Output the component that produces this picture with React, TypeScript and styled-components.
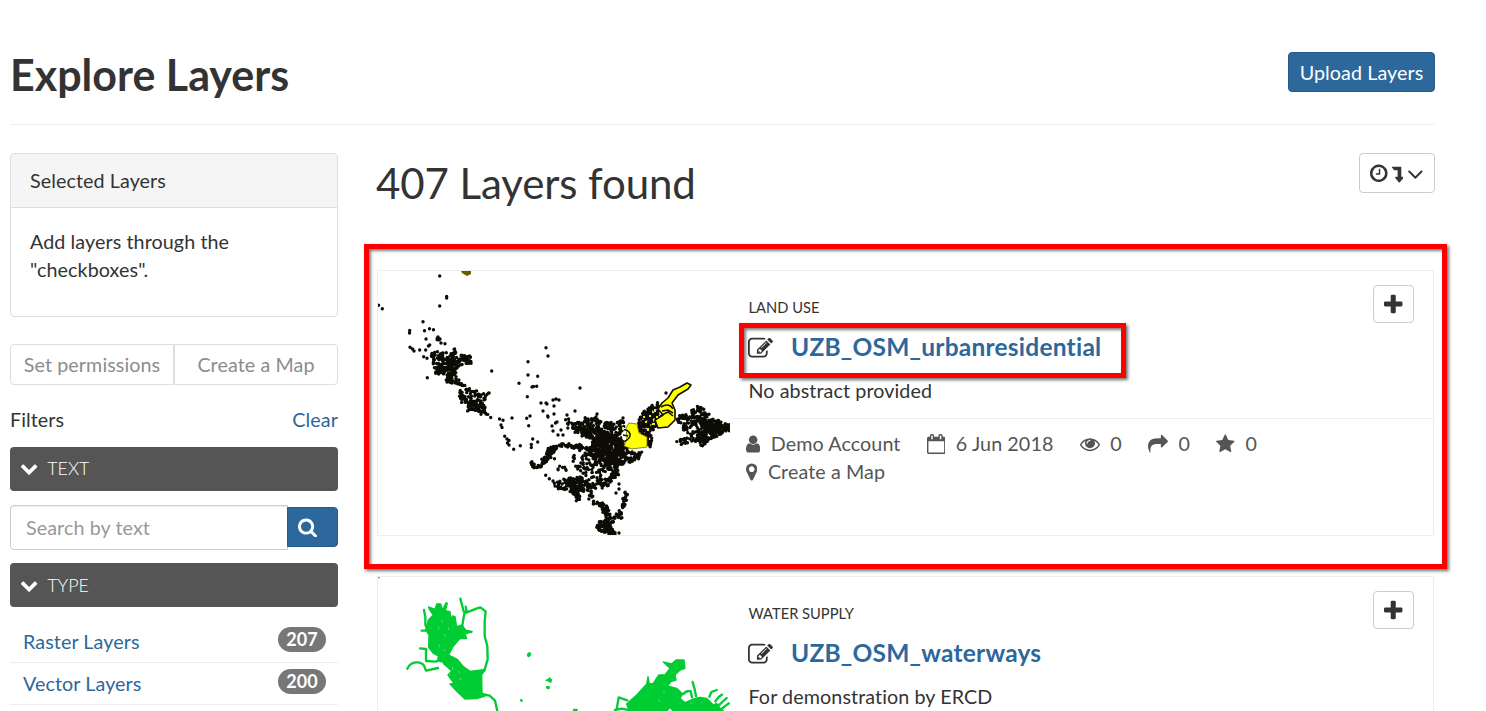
import React from 'react';
import styled, { createGlobalStyle } from 'styled-components';

const GlobalStyle = createGlobalStyle`
  *, *::before, *::after { box-sizing: border-box; }
  body {
    margin: 0;
    background: #fff;
    color: #333;
    font-family: Lato, 'Liberation Sans', sans-serif;
    font-size: 19.72px;
    line-height: 28px;
    letter-spacing: 0.09px;
  }
  button, input { font: inherit; color: inherit; letter-spacing: inherit; }
  h1, h2, h3, p, ul { margin: 0; padding: 0; }
`;

/* ---------- icons ---------- */

const ICONS = {
  chevronDown:
    'M1683 808l-742 741q-19 19-45 19t-45-19l-742-741q-19-19-19-45.500t19-45.500l166-165q19-19 45-19t45 19l531 531 531-531q19-19 45-19t45 19l166 165q19 19 19 45.500t-19 45.500z',
  search:
    'M1216 832q0-185-131.500-316.500t-316.500-131.500-316.500 131.500-131.500 316.500 131.500 316.500 316.500 131.500 316.500-131.500 131.500-316.500zm512 832q0 52-38 90t-90 38q-54 0-90-38l-343-342q-179 124-399 124-143 0-273.500-55.500t-225-150-150-225-55.500-273.500 55.500-273.500 150-225 225-150 273.500-55.500 273.500 55.500 225 150 150 225 55.500 273.500q0 220-124 399l343 343q37 37 37 90z',
  plus: 'M1600 736v192q0 40-28 68t-68 28h-416v416q0 40-28 68t-68 28h-192q-40 0-68-28t-28-68v-416h-416q-40 0-68-28t-28-68v-192q0-40 28-68t68-28h416v-416q0-40 28-68t68-28h192q40 0 68 28t28 68v416h416q40 0 68 28t28 68z',
  clock:
    'M1024 544v448q0 14-9 23t-23 9h-320q-14 0-23-9t-9-23v-64q0-14 9-23t23-9h224v-352q0-14 9-23t23-9h64q14 0 23 9t9 23zm416 352q0-148-73-273t-198-198-273-73-273 73-198 198-73 273 73 273 198 198 273 73 273-73 198-198 73-273zm224 0q0 209-103 385.500t-279.500 279.500-385.500 103-385.500-103-279.500-279.500-103-385.500 103-385.500 279.500-279.500 385.500-103 385.500 103 279.500 279.500 103 385.500z',
  levelDown:
    'M400 256h770q46 0 46 46v850h146q42 0 58 37 17 37-9 69l-320 384q-19 22-49 22t-49-22l-320-384q-27-31-9-69 17-37 58-37h166v-600h-300q-15 0-25-11l-190-238q-13-15-4-34 9-13 27-13z',
  angleDown:
    'M1395 736q0 13-10 23l-466 466q-10 10-23 10t-23-10l-466-466q-10-10-10-23t10-23l50-50q10-10 23-10t23 10l393 393 393-393q10-10 23-10t23 10l50 50q10 10 10 23z',
  user: 'M1536 1399q0 109-62.500 187t-150.500 78h-854q-88 0-150.500-78t-62.500-187q0-85 8.500-160.500t31.500-152 58.500-131 94-89 134.500-34.500q131 128 313 128t313-128q76 0 134.500 34.500t94 89 58.500 131 31.500 152 8.500 160.500zm-256-887q0 159-112.500 271.500t-271.500 112.500-271.500-112.500-112.500-271.500 112.500-271.500 271.500-112.500 271.500 112.500 112.500 271.500z',
  calendar:
    'M192 1664h1408v-1024h-1408v1024zm384-1216v-288q0-14-9-23t-23-9h-64q-14 0-23 9t-9 23v288q0 14 9 23t23 9h64q14 0 23-9t9-23zm768 0v-288q0-14-9-23t-23-9h-64q-14 0-23 9t-9 23v288q0 14 9 23t23 9h64q14 0 23-9t9-23zm384-64v1280q0 52-38 90t-90 38h-1408q-52 0-90-38t-38-90v-1280q0-52 38-90t90-38h128v-96q0-66 47-113t113-47h64q66 0 113 47t47 113v96h384v-96q0-66 47-113t113-47h64q66 0 113 47t47 113v96h128q52 0 90 38t38 90z',
  eye: 'M1664 960q-152-236-381-353 61 104 61 225 0 185-131.500 316.500t-316.500 131.500-316.500-131.500-131.500-316.500q0-121 61-225-229 117-381 353 133 205 333.500 326.500t434.500 121.500 434.500-121.500 333.500-326.500zm-720-384q0-20-14-34t-34-14q-125 0-214.500 89.500t-89.500 214.500q0 20 14 34t34 14 34-14 14-34q0-86 61-147t147-61q20 0 34-14t14-34zm848 384q0 34-20 69-140 230-376.500 368.500t-499.500 138.500-499.500-139-376.500-368q-20-35-20-69t20-69q140-229 376.500-368t499.500-139 499.500 139 376.500 368q20 35 20 69z',
  share:
    'M1792 640q0 26-19 45l-512 512q-19 19-45 19t-45-19-19-45v-256h-224q-98 0-175.500 6t-154 21.500-133 42.500-105.500 69.500-80 101-48.500 138.500-17.500 181q0 55 5 123 0 6 2.500 23.500t2.500 26.500q0 15-8.500 25t-23.500 10q-16 0-28-17-7-9-13-22t-13.500-30-10.500-24q-127-285-127-451 0-199 53-333 162-403 875-403h224v-256q0-26 19-45t45-19 45 19l512 512q19 19 19 45z',
  star: 'M1728 647q0 22-26 48l-363 354 86 500q1 7 1 20 0 21-10.500 35.500t-30.500 14.500q-19 0-40-12l-449-236-449 236q-22 12-40 12-21 0-31.500-14.500t-10.500-35.500q0-6 2-20l86-500-364-354q-25-27-25-48 0-37 56-46l502-73 225-455q19-41 49-41t49 41l225 455 502 73q56 9 56 46z',
  marker:
    'M1152 640q0-106-75-181t-181-75-181 75-75 181 75 181 181 75 181-75 75-181zm256 0q0 109-33 179l-364 774q-16 33-47.500 52t-67.500 19-67.500-19-46.500-52l-365-774q-33-70-33-179 0-212 150-362t362-150 362 150 150 362z',
  edit: 'M888 1184l116-116-152-152-116 116v56h96v96h56zm440-720q-16-16-33 1l-350 350q-17 17-1 33t33-1l350-350q17-17 1-33zm80 594v190q0 119-84.500 203.500t-203.500 84.500h-832q-119 0-203.500-84.500t-84.500-203.500v-832q0-119 84.500-203.500t203.500-84.500h832q63 0 117 25 15 7 18 23 3 17-9 29l-49 49q-14 14-32 8-23-6-45-6h-832q-66 0-113 47t-47 113v832q0 66 47 113t113 47h832q66 0 113-47t47-113v-126q0-13 9-22l64-64q15-15 35-7t20 29zm-96-738l288 288-672 672h-288v-288zm444 132l-92 92-288-288 92-92q28-28 68-28t68 28l152 152q28 28 28 68t-28 68z',
};

/* [left edge, advance width] of each glyph on the 1792 grid */
const BOX: Record<keyof typeof ICONS, [number, number]> = {
  chevronDown: [0, 1792],
  search: [64, 1664],
  plus: [192, 1408],
  clock: [128, 1536],
  levelDown: [384, 1024],
  angleDown: [320, 1152],
  user: [256, 1280],
  calendar: [64, 1664],
  eye: [0, 1792],
  share: [0, 1792],
  star: [64, 1664],
  marker: [384, 1024],
  edit: [0, 1792],
};

const Glyph = styled.svg`
  display: block;
  flex: none;
  fill: currentColor;
`;

function Icon({ name, size = 20 }: { name: keyof typeof ICONS; size?: number }) {
  const [x, w] = BOX[name];
  return (
    <Glyph width={(w / 1792) * size} height={size} viewBox={`${x} 0 ${w} 1792`} aria-hidden>
      <path d={ICONS[name]} />
    </Glyph>
  );
}

/* ---------- page ---------- */

const Page = styled.div`
  width: 1486px;
  height: 711px;
  overflow: hidden;
  padding: 0 51px 0 10px;
`;

const Header = styled.header`
  height: 125px;
  display: flex;
  justify-content: space-between;
  align-items: flex-start;
  border-bottom: 1px solid #eee;
  padding-top: 52px;
`;

const PageTitle = styled.h1`
  font-size: 43px;
  line-height: 45px;
  font-weight: 700;
  letter-spacing: 0;
`;

const PrimaryButton = styled.button`
  height: 40px;
  width: 147px;
  padding: 2px 0 0;
  border: 1px solid #265a8b;
  border-radius: 4px;
  background: #2c689c;
  color: #fff;
  line-height: 28px;
`;

const Columns = styled.div`
  display: flex;
  gap: 39px;
  padding: 28px 0 0;
`;

const Sidebar = styled.aside`
  width: 328px;
  flex: none;
`;

const Panel = styled.section`
  height: 164px;
  border: 1px solid #ddd;
  border-radius: 4px;
  overflow: hidden;
`;

const PanelHeading = styled.div`
  height: 54px;
  padding: 13px 19px;
  background: #f5f5f5;
  border-bottom: 1px solid #ddd;
`;

const PanelBody = styled.div`
  padding: 20px 80px 0 19px;
`;

const ButtonGroup = styled.div`
  display: flex;
  height: 41px;
  margin-top: 27px;
`;

const GroupButton = styled.button<{ $side: 'left' | 'right' }>`
  flex: 1;
  padding: 1px 0 0;
  background: #fff;
  border: 1px solid #ddd;
  border-radius: ${(p) => (p.$side === 'left' ? '4px 0 0 4px' : '0 4px 4px 0')};
  color: #8c8c8c;
`;

const FilterHead = styled.div`
  display: flex;
  justify-content: space-between;
  padding: 21px 0 13px;
`;

const Link = styled.a`
  color: #2c689c;
  text-decoration: none;
`;

const SectionBar = styled.div<{ $lift?: number }>`
  display: flex;
  align-items: center;
  gap: 9px;
  height: 44px;
  padding: 0 10px ${(p) => p.$lift ?? 0}px;
  border-radius: 4px;
  background: #555;
  color: #fff;
  font-size: 17.900px;
  font-weight: 300;
  letter-spacing: 0;
`;

const SearchRow = styled.form`
  display: flex;
  align-items: flex-start;
  margin: 14px 0 13px;
`;

const SearchInput = styled.input`
  width: 278px;
  height: 45px;
  padding: 0 15px 0 15px;
  border: 1px solid #ccc;
  border-radius: 4px 0 0 4px;
  box-shadow: inset 0 1px 1px rgba(0, 0, 0, 0.075);
  background: #fff;
  outline: none;
  &::placeholder { color: #999; opacity: 1; }
`;

const SearchButton = styled.button`
  display: flex;
  align-items: center;
  width: 51px;
  height: 40px;
  margin: 2px 0 0 -1px;
  padding: 0 0 0 10px;
  border: 1px solid #265a8b;
  border-radius: 0 4px 4px 0;
  background: #2c689c;
  color: #fff;
`;

const TypeList = styled.ul`
  list-style: none;
  padding-top: 14px;
`;

const TypeItem = styled.li`
  display: flex;
  justify-content: space-between;
  height: 42px;
  padding: 7px 12px 0 13px;
  border-bottom: 1px solid #eee;
`;

const Badge = styled.span`
  width: 48px;
  height: 25px;
  margin-top: -1px;
  border-radius: 13px;
  background: #777;
  color: #fff;
  font-size: 18px;
  font-weight: 700;
  line-height: 25px;
  text-align: center;
`;

const Main = styled.main`
  width: 1058px;
  flex: none;
`;

const ResultsHead = styled.div`
  display: flex;
  justify-content: space-between;
  height: 117px;
`;

const ResultsTitle = styled.h2`
  font-size: 42px;
  line-height: 46px;
  font-weight: 400;
  letter-spacing: -0.1px;
  padding-top: 7px;
  margin-left: -1px;
`;

const SortButton = styled.button`
  display: flex;
  align-items: center;
  justify-content: center;
  gap: 4px;
  width: 76px;
  height: 40px;
  padding: 1px 0 0;
  border: 1px solid #ccc;
  border-radius: 4px;
  background: #fff;
`;

const Card = styled.article`
  position: relative;
  display: flex;
  width: 1057px;
  height: 266px;
  margin-bottom: 40px;
  border: 1px solid #eee;
`;

const Thumb = styled.div`
  width: 352px;
  height: 264px;
  flex: none;
  overflow: hidden;
`;

const CardBody = styled.div`
  flex: 1;
  padding-top: 22px;
  margin-left: 1px;
`;

const CardTop = styled.div`
  position: relative;
  height: 125px;
  padding-left: 17px;
`;

const Category = styled.p`
  font-size: 14.7px;
  line-height: 28px;
  letter-spacing: 0;
  margin-left: 0.5px;
`;

const CardTitle = styled.h3`
  display: flex;
  align-items: center;
  gap: 18px;
  height: 32px;
  margin-top: 10px;
  font-size: 24.5px;
  font-weight: 700;
  letter-spacing: 0.23px;

  svg {
    margin-top: 3px;
  }
`;

const Abstract = styled.p`
  margin: 14px 0 0 0.5px;
`;

const AddButton = styled.button`
  position: absolute;
  top: 14px;
  right: 19px;
  display: flex;
  align-items: center;
  justify-content: center;
  width: 41px;
  height: 38px;
  padding: 1px 0 0;
  border: 1px solid #ccc;
  border-radius: 4px;
  background: #fff;
`;

const Meta = styled.div`
  border-top: 1px solid #eee;
  padding: 11px 0 0 15px;
  color: #555;
`;

const MetaRow = styled.div`
  display: flex;
  height: 28px;
  align-items: center;
  gap: 26.3px;
`;

const MetaItem = styled.span`
  display: flex;
  align-items: center;
  gap: 10.5px;
  white-space: nowrap;
`;

const Highlight = styled.div`
  position: absolute;
  border: 5px solid #f00;
  box-shadow: 2px 2px 3px rgba(0, 0, 0, 0.55), inset 2px 2px 3px rgba(0, 0, 0, 0.5);
  pointer-events: none;
`;

const CardHighlight = styled(Highlight)`
  left: -14px;
  top: -27px;
  width: 1083px;
  height: 325px;
`;

const TitleHighlight = styled(Highlight)`
  left: 8px;
  top: 30px;
  width: 387px;
  height: 55px;
`;

/* ---------- thumbnails ---------- */

type Pt = [number, number];

const toPoints = (s: string): Pt[] => s.split(' ').map((p) => p.split(',').map(Number) as Pt);

const contains = (poly: Pt[], x: number, y: number) => {
  let inside = false;
  for (let i = 0, j = poly.length - 1; i < poly.length; j = i++) {
    const [xi, yi] = poly[i];
    const [xj, yj] = poly[j];
    if (yi > y !== yj > y && x < ((xj - xi) * (y - yi)) / (yj - yi) + xi) inside = !inside;
  }
  return inside;
};

const generator = (seed: number) => {
  let s = seed;
  const rnd = () => {
    s = (s * 16807) % 2147483647;
    return s / 2147483647;
  };
  for (let i = 0; i < 5; i++) rnd();
  return rnd;
};

/* Deterministic scatter of settlements inside an outline */
const scatter = (outline: string, density: number, seed: number): Pt[] => {
  const poly = toPoints(outline);
  const xs = poly.map((p) => p[0]);
  const ys = poly.map((p) => p[1]);
  const [x0, x1, y0, y1] = [Math.min(...xs), Math.max(...xs), Math.min(...ys), Math.max(...ys)];
  const rnd = generator(seed);
  const out: Pt[] = [];
  const tries = (x1 - x0) * (y1 - y0) * density;
  for (let i = 0; i < tries; i++) {
    const x = x0 + rnd() * (x1 - x0);
    const y = y0 + rnd() * (y1 - y0);
    if (contains(poly, x, y)) out.push([x, y]);
  }
  return out;
};

/* Settlements strung along a road, spread to either side */
const along = (line: string, spread: number, perPx: number, seed: number): Pt[] => {
  const pts = toPoints(line);
  const rnd = generator(seed);
  const out: Pt[] = [];
  for (let i = 1; i < pts.length; i++) {
    const [ax, ay] = pts[i - 1];
    const [bx, by] = pts[i];
    const n = Math.hypot(bx - ax, by - ay) * perPx;
    for (let k = 0; k < n; k++) {
      const t = rnd();
      out.push([
        ax + (bx - ax) * t + (rnd() + rnd() - 1) * spread,
        ay + (by - ay) * t + (rnd() + rnd() - 1) * spread,
      ]);
    }
  }
  return out;
};

const SINGLES = toPoints(
  '61.7,5 68.7,25.500 68.7,27 61.7,35 0.5,34.300 4.300,37.700 45,50.700 31.700,59.500 31.500,62 46.500,59.700 51.500,57.700 55.500,58.700 48,68 60,66 62,68 63,72 67,72.700 51.700,74 50.500,75 32,76.300 34.500,78 36,80 41.700,79 47.700,79 45.700,85.700 49,87.300 54,84 49.300,106.700 113.700,100 168,76.700 170,85 150,90.700 150,104 159.700,105.300 141,112.300 154,116 155.500,115.500 158.700,115.300 149.300,125.700 163,132 169,133 165,140 169.700,145 152,145 148.700,147.300 150.700,154.700 134,147 121.500,148 125,149.300 123,154 124,156.500 126.700,165.300 129,168 131,169.500 129.500,172 131,174 135.700,178.300 142.300,174.700 154.700,168 159.700,171 153.300,173.500 153.300,176.500 171.300,207.700 167.700,204.300 175,129 178,128 181,129 168,132 176,135 165,140 189,144 197,140 176,143 170,146 179,151 177.500,152 174,155 175,160 183,159 191,151 185,164 180,164 202,117 288,122 241,213 241,218 238,222 241,262 175,210 177,215 170,188 173,183 164,193 219,143 218,146 245,147 243,150'
);

const CLUSTERS: [string, number][] = [
  ['53,82 64,79 72,84 76,76 79,84 94,84 93,93 82,94 77,104 86,114 79,113 67,111 69,104 56,103', 0.24],
  ['60,92 80,88 80,98 72,106 64,101', 0.2],
  ['58,65 65,69 68,75 60,73', 0.14],
  ['80,110 92,117 104,122 112,122 110,127 104,131 109,139 113,147 105,144 99,142 89,141 90,131 82,132', 0.2],
  ['92,127 104,130 107,142 96,139', 0.25],
  ['192,154 205,149 217,147 225,151 245,149 247,152 242,166 249,177 264,181 257,191 242,188 237,199 227,198 217,189 205,181 192,178 212,176 213,167 197,162', 0.16],
  ['203,153 220,158 232,163 242,166 249,177 240,187 236,196 226,192 218,183 222,174 213,163', 0.2],
  ['168,178 178,174 178,188 170,190', 0.22],
  ['194,184 212,182 230,192 238,204 230,218 218,212 202,205 195,192', 0.09],
  ['177,194 190,197 191,203 180,199', 0.15],
  ['176,212 192,205 202,202 206,212 218,214 205,222 203,230 196,231 193,222 180,218', 0.14],
  ['187,209 204,205 207,220 195,224', 0.3],
  ['222,248 232,250 236,262 228,262 217,258', 0.24],
  ['297,149 309,141 320,135 327,136 327,141 339,147 344,154 352,153 352,158 342,164 332,169 325,176 315,170 304,176 297,170 309,164 304,157', 0.18],
  ['314,144 340,149 351,154 341,164 326,172 316,168 326,158', 0.2],
  ['261,147 267,139 279,131 284,134 281,146 285,149 277,158 272,162 275,169 272,176 266,170 260,160', 0.3],
];

const ROADS: [string, number, number][] = [
  ['192,152 208,162 222,172 238,184', 6, 1.8],
  ['206,150 224,163 244,174', 5, 1.5],
  ['164,194 172,180 184,174 212,177 226,186', 3, 1.6],
  ['218,150 232,153 246,150', 3, 0.9],
  ['238,190 238,203 228,214 212,214 206,210', 4, 1.3],
  ['212,216 214,231 226,235 230,240', 3, 0.9],
  ['248,222 246,234 240,245 231,252', 3.500, 1.4],
  ['226,234 230,248 227,258 236,264', 4, 1.6],
  ['153,191 157,197 162,195 172,182', 1.800, 1.5],
  ['238,192 256,190 264,180', 3.500, 1.3],
  ['299,149 312,144 326,137', 3, 0.8],
  ['340,155 352,158', 3, 1.5],
];

const DOTS: Pt[] = [
  ...SINGLES,
  ...CLUSTERS.flatMap(([o, d], i) => scatter(o, d, 977 + i * 7919)),
  ...ROADS.flatMap(([l, w, n], i) => along(l, w, n, 3571 + i * 6151)),
];
const dotPath = DOTS.map(([x, y]) => `M${x.toFixed(1)} ${y.toFixed(1)}h.01`).join('');

function ResidentialMap() {
  return (
    <svg width="352" height="264" viewBox="0 0 352 264" aria-hidden>
      <path d="M83 0h10v3l-4 2-5-3z" fill="#655f00" />
      <path d={dotPath} fill="none" stroke="#0c0c04" strokeWidth="3.400" strokeLinecap="round" />
      <path
        d="M251 152l8 1 2 9 8 4v10l-15 2-8-3 3-8-1-10z"
        fill="#ff0"
        stroke="#6d6900"
        strokeWidth="0.8"
      />
      <path
        d="M284 132l6-5 5-8 7-3 7-4 4 2-3 4-10 6-6 8 3 7v10l-7 7-10 1-3-8 8-5-5-6z"
        fill="#ff0"
        stroke="#111104"
        strokeWidth="1.6"
        strokeLinejoin="round"
      />
      <path
        d="M243 160q5-3 8 1t-2 8-6-4M245 164l5 1M284 140l6-1 5 3M283 136q8-5 12 2M282 145l8-4 5 4"
        fill="none"
        stroke="#111104"
        strokeWidth="1.5"
      />
      <path
        d="M267 150h2v2h-2zM271 144h2v2h-2zM276 138h2v3h-2zM274 152h3v2h-3zM269 157h2v3h-2zM278 145h2v2h-2zM265 145h2v2h-2zM244 156h2v3h-2z"
        fill="#ee0"
      />
    </svg>
  );
}

function WaterwaysMap() {
  return (
    <svg width="352" height="264" viewBox="24 51 1056 792" aria-hidden>
      <g fill="#0c3" stroke="#0c3" strokeWidth="4" strokeLinejoin="round">
        <path d="M24 51h5v4h-5z" stroke="none" />
        <path d="M200 132L212 132L218 150L228 128L232 130L226 152L240 155L243 185L247 168L255 170L260 200L276 195L288 212L306 215L285 222L290 236L270 236L250 258L236 285L262 298L280 320L300 334L346 328L335 345L336 398L345 408L320 416L285 417L262 395L240 372L252 370L234 345L246 332L222 308L203 302L205 288L190 280L176 262L177 225L167 210L175 180L190 165L178 148L176 141L195 148Z" />
        <path d="M778 453L770 432L800 405L818 385L830 372L834 350L838 372L850 370L866 345L885 345L900 325L880 306L905 312L918 300L942 300L945 325L930 330L915 345L918 360L903 365L892 378L920 385L938 402L930 415L945 428L975 415L990 412L1010 415L1030 435L1040 430L1050 445L1060 453H910L900 442L890 453Z" />
      </g>
      <g fill="none" stroke="#0c3" strokeWidth="7" strokeLinecap="round" strokeLinejoin="round">
        <path d="M271 116l10 38 8 4 30-12 12-4 16 12-3 30v44l8 30 1 40-10 34M283 160l-6 36-20 22M290 152l-3-12M162 150l4 20v24l8 16M286 212l18 4M155 212h12" />
        <path d="M112 326q8-18 26-19t24 10l6 15 36-8M150 265l18 2v36l30 2 16-10M222 310l22 20M240 298l26 10 14 22" />
        <path d="M335 402l24 5 16 15 7 31M968 366l6 22 4 20M740 448l6-36 26 9M940 402q10-12 22-8l4 18M1018 410l6-14 16-6M1036 424q8-14 20-20M1046 436l24-22M1056 446l20-16M612 450h8M735 450l20-4 20 4" />
      </g>
      <path
        d="M472 283l4-5 6 1v6l-6 6-4-3zM539 352l2 5 5 2-4 9-6-4-9-3 8-3zM528 380h10v6h-7zM451 418l7 3-4 5z"
        fill="#0c3"
        stroke="#0c3"
        strokeWidth="3"
      />
      <path
        d="M205 200l2 10m8-30l2 8m6 34l3 8m-20 22l3 10m26-60l1 8m-16 60l8 2m36 60l6 8m-22-20l-1 10m20 26l8 2m-40-18l6 6M880 392l4 8m-20 20l8 4M960 428l8 4m24-8l6 5"
        stroke="#79e38f"
        strokeWidth="2"
        fill="none"
      />
    </svg>
  );
}

/* ---------- content ---------- */

interface Layer {
  category: string;
  title: string;
  abstract: string;
  map: React.ReactNode;
  stats?: [keyof typeof ICONS, string][];
  highlighted?: boolean;
}

const LAYERS: Layer[] = [
  {
    category: 'LAND USE',
    title: 'UZB_OSM_urbanresidential',
    abstract: 'No abstract provided',
    map: <ResidentialMap />,
    stats: [
      ['user', 'Demo Account'],
      ['calendar', '6 Jun 2018'],
      ['eye', '0'],
      ['share', '0'],
      ['star', '0'],
    ],
    highlighted: true,
  },
  {
    category: 'WATER SUPPLY',
    title: 'UZB_OSM_waterways',
    abstract: 'For demonstration by ERCD',
    map: <WaterwaysMap />,
  },
];

function LayerCard({ layer }: { layer: Layer }) {
  return (
    <Card>
      <Thumb>{layer.map}</Thumb>
      <CardBody>
        <CardTop>
          <Category>{layer.category}</Category>
          <CardTitle>
            <Icon name="edit" size={25} />
            <Link href="#">{layer.title}</Link>
          </CardTitle>
          <Abstract>{layer.abstract}</Abstract>
          {layer.highlighted && <TitleHighlight />}
        </CardTop>
        {layer.stats && (
          <Meta>
            <MetaRow>
              {layer.stats.map(([icon, text]) => (
                <MetaItem key={icon}>
                  <Icon name={icon} />
                  {text}
                </MetaItem>
              ))}
            </MetaRow>
            <MetaRow>
              <MetaItem>
                <Icon name="marker" />
                Create a Map
              </MetaItem>
            </MetaRow>
          </Meta>
        )}
      </CardBody>
      <AddButton aria-label="Add layer">
        <Icon name="plus" size={23.500} />
      </AddButton>
      {layer.highlighted && <CardHighlight />}
    </Card>
  );
}

export default function App() {
  return (
    <>
      <GlobalStyle />
      <Page>
        <Header>
          <PageTitle>Explore Layers</PageTitle>
          <PrimaryButton>Upload Layers</PrimaryButton>
        </Header>
        <Columns>
          <Sidebar>
            <Panel>
              <PanelHeading>Selected Layers</PanelHeading>
              <PanelBody>Add layers through the "checkboxes".</PanelBody>
            </Panel>
            <ButtonGroup>
              <GroupButton $side="left">Set permissions</GroupButton>
              <GroupButton $side="right">Create a Map</GroupButton>
            </ButtonGroup>
            <FilterHead>
              <span>Filters</span>
              <Link href="#">Clear</Link>
            </FilterHead>
            <SectionBar $lift={2}>
              <Icon name="chevronDown" size={18.2} />
              TEXT
            </SectionBar>
            <SearchRow>
              <SearchInput placeholder="Search by text" />
              <SearchButton type="button" aria-label="Search">
                <Icon name="search" size={20.500} />
              </SearchButton>
            </SearchRow>
            <SectionBar>
              <Icon name="chevronDown" size={18.2} />
              TYPE
            </SectionBar>
            <TypeList>
              <TypeItem>
                <Link href="#">Raster Layers</Link>
                <Badge>207</Badge>
              </TypeItem>
              <TypeItem>
                <Link href="#">Vector Layers</Link>
                <Badge>200</Badge>
              </TypeItem>
            </TypeList>
          </Sidebar>
          <Main>
            <ResultsHead>
              <ResultsTitle>407 Layers found</ResultsTitle>
              <SortButton aria-label="Sort">
                <Icon name="clock" size={20.500} />
                <Icon name="levelDown" size={20} />
                <Icon name="angleDown" size={26} />
              </SortButton>
            </ResultsHead>
            {LAYERS.map((layer) => (
              <LayerCard key={layer.title} layer={layer} />
            ))}
          </Main>
        </Columns>
      </Page>
    </>
  );
}
